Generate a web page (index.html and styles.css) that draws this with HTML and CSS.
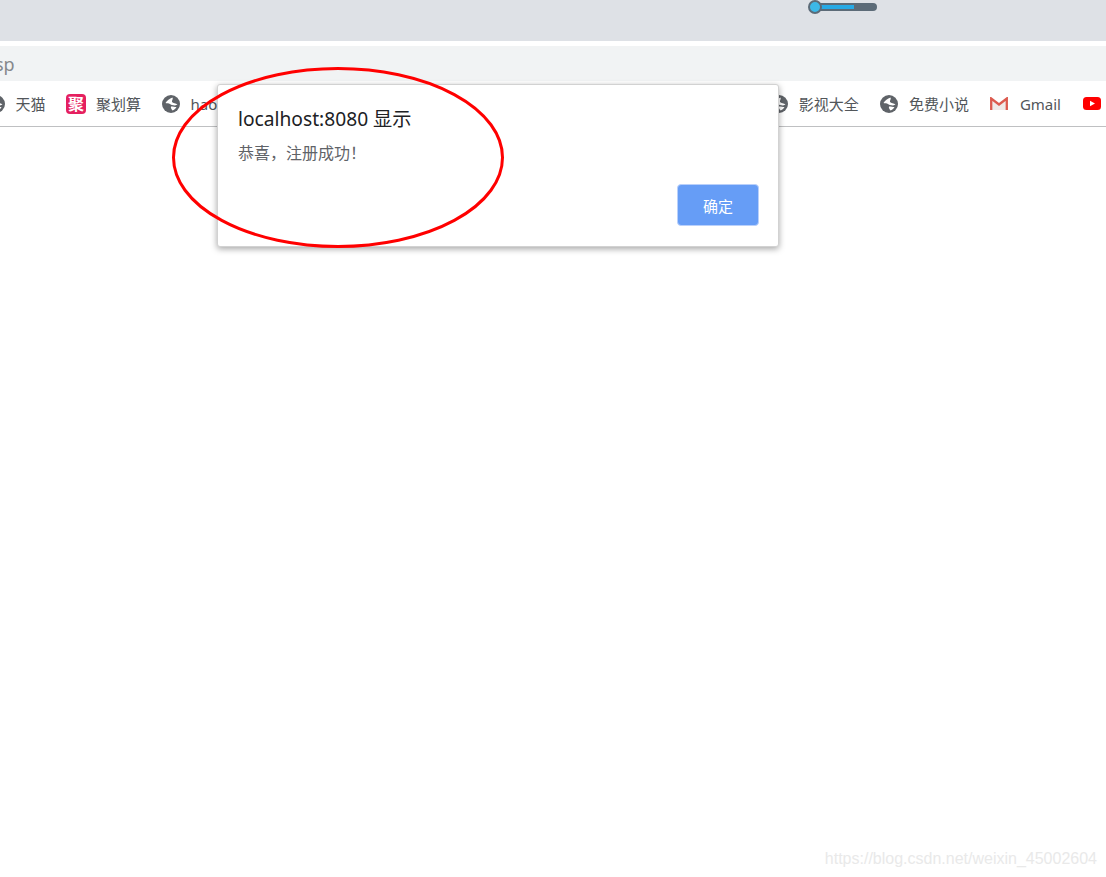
FILE: index.html
```html
<!DOCTYPE html>
<html lang="en">
<head>
    <meta charset="UTF-8">
    <meta name="viewport" content="width=device-width, initial-scale=1.0">
    <title>localhost:8080</title>
    <link rel="stylesheet" href="styles.css">
</head>
<body>
    <header class="tab-strip">
        <div class="slider"><span class="slider-fill"></span><span class="slider-knob"></span></div>
    </header>

    <div class="address-bar"><span class="address-text">sp</span></div>

    <nav class="bookmarks">
        <div class="bookmark-group left-group">
            <a class="bookmark">
                <svg class="globe" viewBox="0 0 18 18"><use href="#globe-icon"></use></svg>
                天猫
            </a>
            <a class="bookmark">
                <span class="ju-icon">聚</span>
                聚划算
            </a>
            <a class="bookmark">
                <svg class="globe" viewBox="0 0 18 18"><use href="#globe-icon"></use></svg>
                hao
            </a>
        </div>
        <div class="bookmark-group">
            <a class="bookmark">
                <svg class="globe" viewBox="0 0 18 18"><use href="#globe-icon"></use></svg>
                影视大全
            </a>
            <a class="bookmark">
                <svg class="globe" viewBox="0 0 18 18"><use href="#globe-icon"></use></svg>
                免费小说
            </a>
            <a class="bookmark">
                <svg class="gmail" viewBox="0 0 18 13">
                    <path d="M2 1.500l7 5.500 7-5.500V13H2z" fill="#efe9e7"/>
                    <path d="M1.200 13V1.500L9 7.500l7.800-6V13" fill="none" stroke="#dc5a4e" stroke-width="2.300"/>
                </svg>
                Gmail
            </a>
            <a class="bookmark">
                <svg class="youtube" viewBox="0 0 18 13">
                    <rect width="18" height="13" rx="3.500" fill="#f00"/>
                    <path d="M7 3.800l5 2.700-5 2.700z" fill="#fff"/>
                </svg>
            </a>
        </div>
    </nav>

    <svg class="defs" width="0" height="0">
        <symbol id="globe-icon" viewBox="0 0 18 18">
            <circle cx="9" cy="9" r="9" fill="#5f6368"/>
            <path d="M3.500 8C5 5.500 7.500 3.500 10.500 2.500 11.500 4 9.500 5.500 10 7 11 8.500 14 8 15.500 9.500L13 10.500C11 10.500 8.500 9.500 7 8.500 5.500 8 4.500 8.500 3.500 8z" fill="#fff"/>
            <path d="M9 11.500C11 11.500 13 12 14.500 12 13.500 14 12 15 10.500 15.500 9.500 14 8.500 13 9 11.500z" fill="#fff"/>
        </symbol>
    </svg>

    <main class="page">
        <span class="watermark">https://blog.csdn.net/weixin_45002604</span>
    </main>

    <div class="dialog">
        <h1 class="dialog-title">localhost:8080 显示</h1>
        <p class="dialog-message">恭喜，注册成功！</p>
        <div class="dialog-actions">
            <button class="dialog-button">确定</button>
        </div>
    </div>

    <svg class="annotation" width="340" height="186" viewBox="0 0 340 186">
        <ellipse cx="166" cy="90.500" rx="164.500" ry="89" fill="none" stroke="#f00" stroke-width="3"/>
    </svg>
</body>
</html>
```

FILE: styles.css
```css
html, body {
    height: 100%;
}

body {
    display: flex;
    flex-direction: column;
    position: relative;
    margin: 0;
    overflow: hidden;
    background-color: #fff;
    font-family: "Noto Sans", "Noto Sans CJK SC", sans-serif;
}

.tab-strip {
    flex: none;
    height: 41px;
    margin-bottom: 5px;
    padding-left: 808px;
    box-sizing: border-box;
    background-color: #dee1e6;
}

.slider {
    position: relative;
    width: 69px;
    height: 14px;
}

.slider::before {
    content: "";
    position: absolute;
    left: 4px;
    right: 0;
    top: 3px;
    height: 8px;
    border-radius: 4px;
    background-color: #5c6b78;
}

.slider-fill {
    position: absolute;
    left: 6px;
    top: 5px;
    width: 40px;
    height: 4px;
    background-color: #27aae6;
}

.slider-knob {
    position: absolute;
    left: 0;
    top: 0;
    width: 10px;
    height: 10px;
    border: 2px solid #5c6b78;
    border-radius: 50%;
    background-color: #3cb8e8;
}

.address-bar {
    flex: none;
    display: flex;
    align-items: center;
    height: 35px;
    background-color: #f1f3f4;
}

.address-text {
    margin-left: -5px;
    color: #85888c;
    font-size: 18px;
}

.bookmarks {
    flex: none;
    display: flex;
    justify-content: space-between;
    height: 46px;
    box-sizing: border-box;
    border-bottom: 1px solid #bfc0c2;
    overflow: hidden;
}

.bookmark-group {
    display: flex;
    align-items: center;
    gap: 21px;
}

.left-group {
    margin-left: -13.500px;
    gap: 20.500px;
}

.bookmark {
    display: flex;
    align-items: center;
    gap: 11px;
    color: #52565a;
    font-size: 15px;
    line-height: 20px;
    white-space: nowrap;
}

.globe {
    width: 18px;
    height: 18px;
    flex: none;
}

.ju-icon {
    display: flex;
    align-items: center;
    justify-content: center;
    width: 20px;
    height: 20px;
    margin-right: -1px;
    border-radius: 4px;
    background-color: #e5205f;
    color: #fff;
    font-size: 16px;
    font-weight: 700;
}

.gmail {
    width: 18px;
    height: 13px;
    margin-right: 1px;
    flex: none;
}

.youtube {
    width: 18px;
    height: 13px;
    margin: 0 5px 0 1px;
    flex: none;
}

.defs {
    position: absolute;
}

.page {
    flex: 1;
    display: flex;
    align-items: flex-end;
    justify-content: flex-end;
    padding: 0 9px 8px 0;
}

.watermark {
    color: #e9e9e9;
    font-family: "Liberation Sans", sans-serif;
    font-size: 16px;
    line-height: 20px;
}

.dialog {
    position: absolute;
    left: 217px;
    top: 84px;
    width: 562px;
    height: 163px;
    padding: 21px 19px 20px 20px;
    box-sizing: border-box;
    display: flex;
    flex-direction: column;
    border: 1px solid #d2d2d2;
    border-radius: 3px;
    background-color: #fff;
    box-shadow: 0 2px 6px rgba(0, 0, 0, 0.35);
}

.dialog-title {
    margin: 0;
    color: #202124;
    font-size: 19.200px;
    font-weight: 400;
    line-height: 26px;
}

.dialog-message {
    margin: 11px 0 0;
    color: #5f6368;
    font-size: 16px;
    line-height: 20px;
}

.dialog-actions {
    display: flex;
    justify-content: flex-end;
    margin-top: auto;
}

.dialog-button {
    width: 82px;
    height: 42px;
    padding: 0;
    border: 1px solid #b9d0fb;
    border-radius: 4px;
    background-color: #669df6;
    color: #fff;
    font-family: inherit;
    font-size: 15px;
}

.annotation {
    position: absolute;
    left: 172px;
    top: 67px;
}
```
